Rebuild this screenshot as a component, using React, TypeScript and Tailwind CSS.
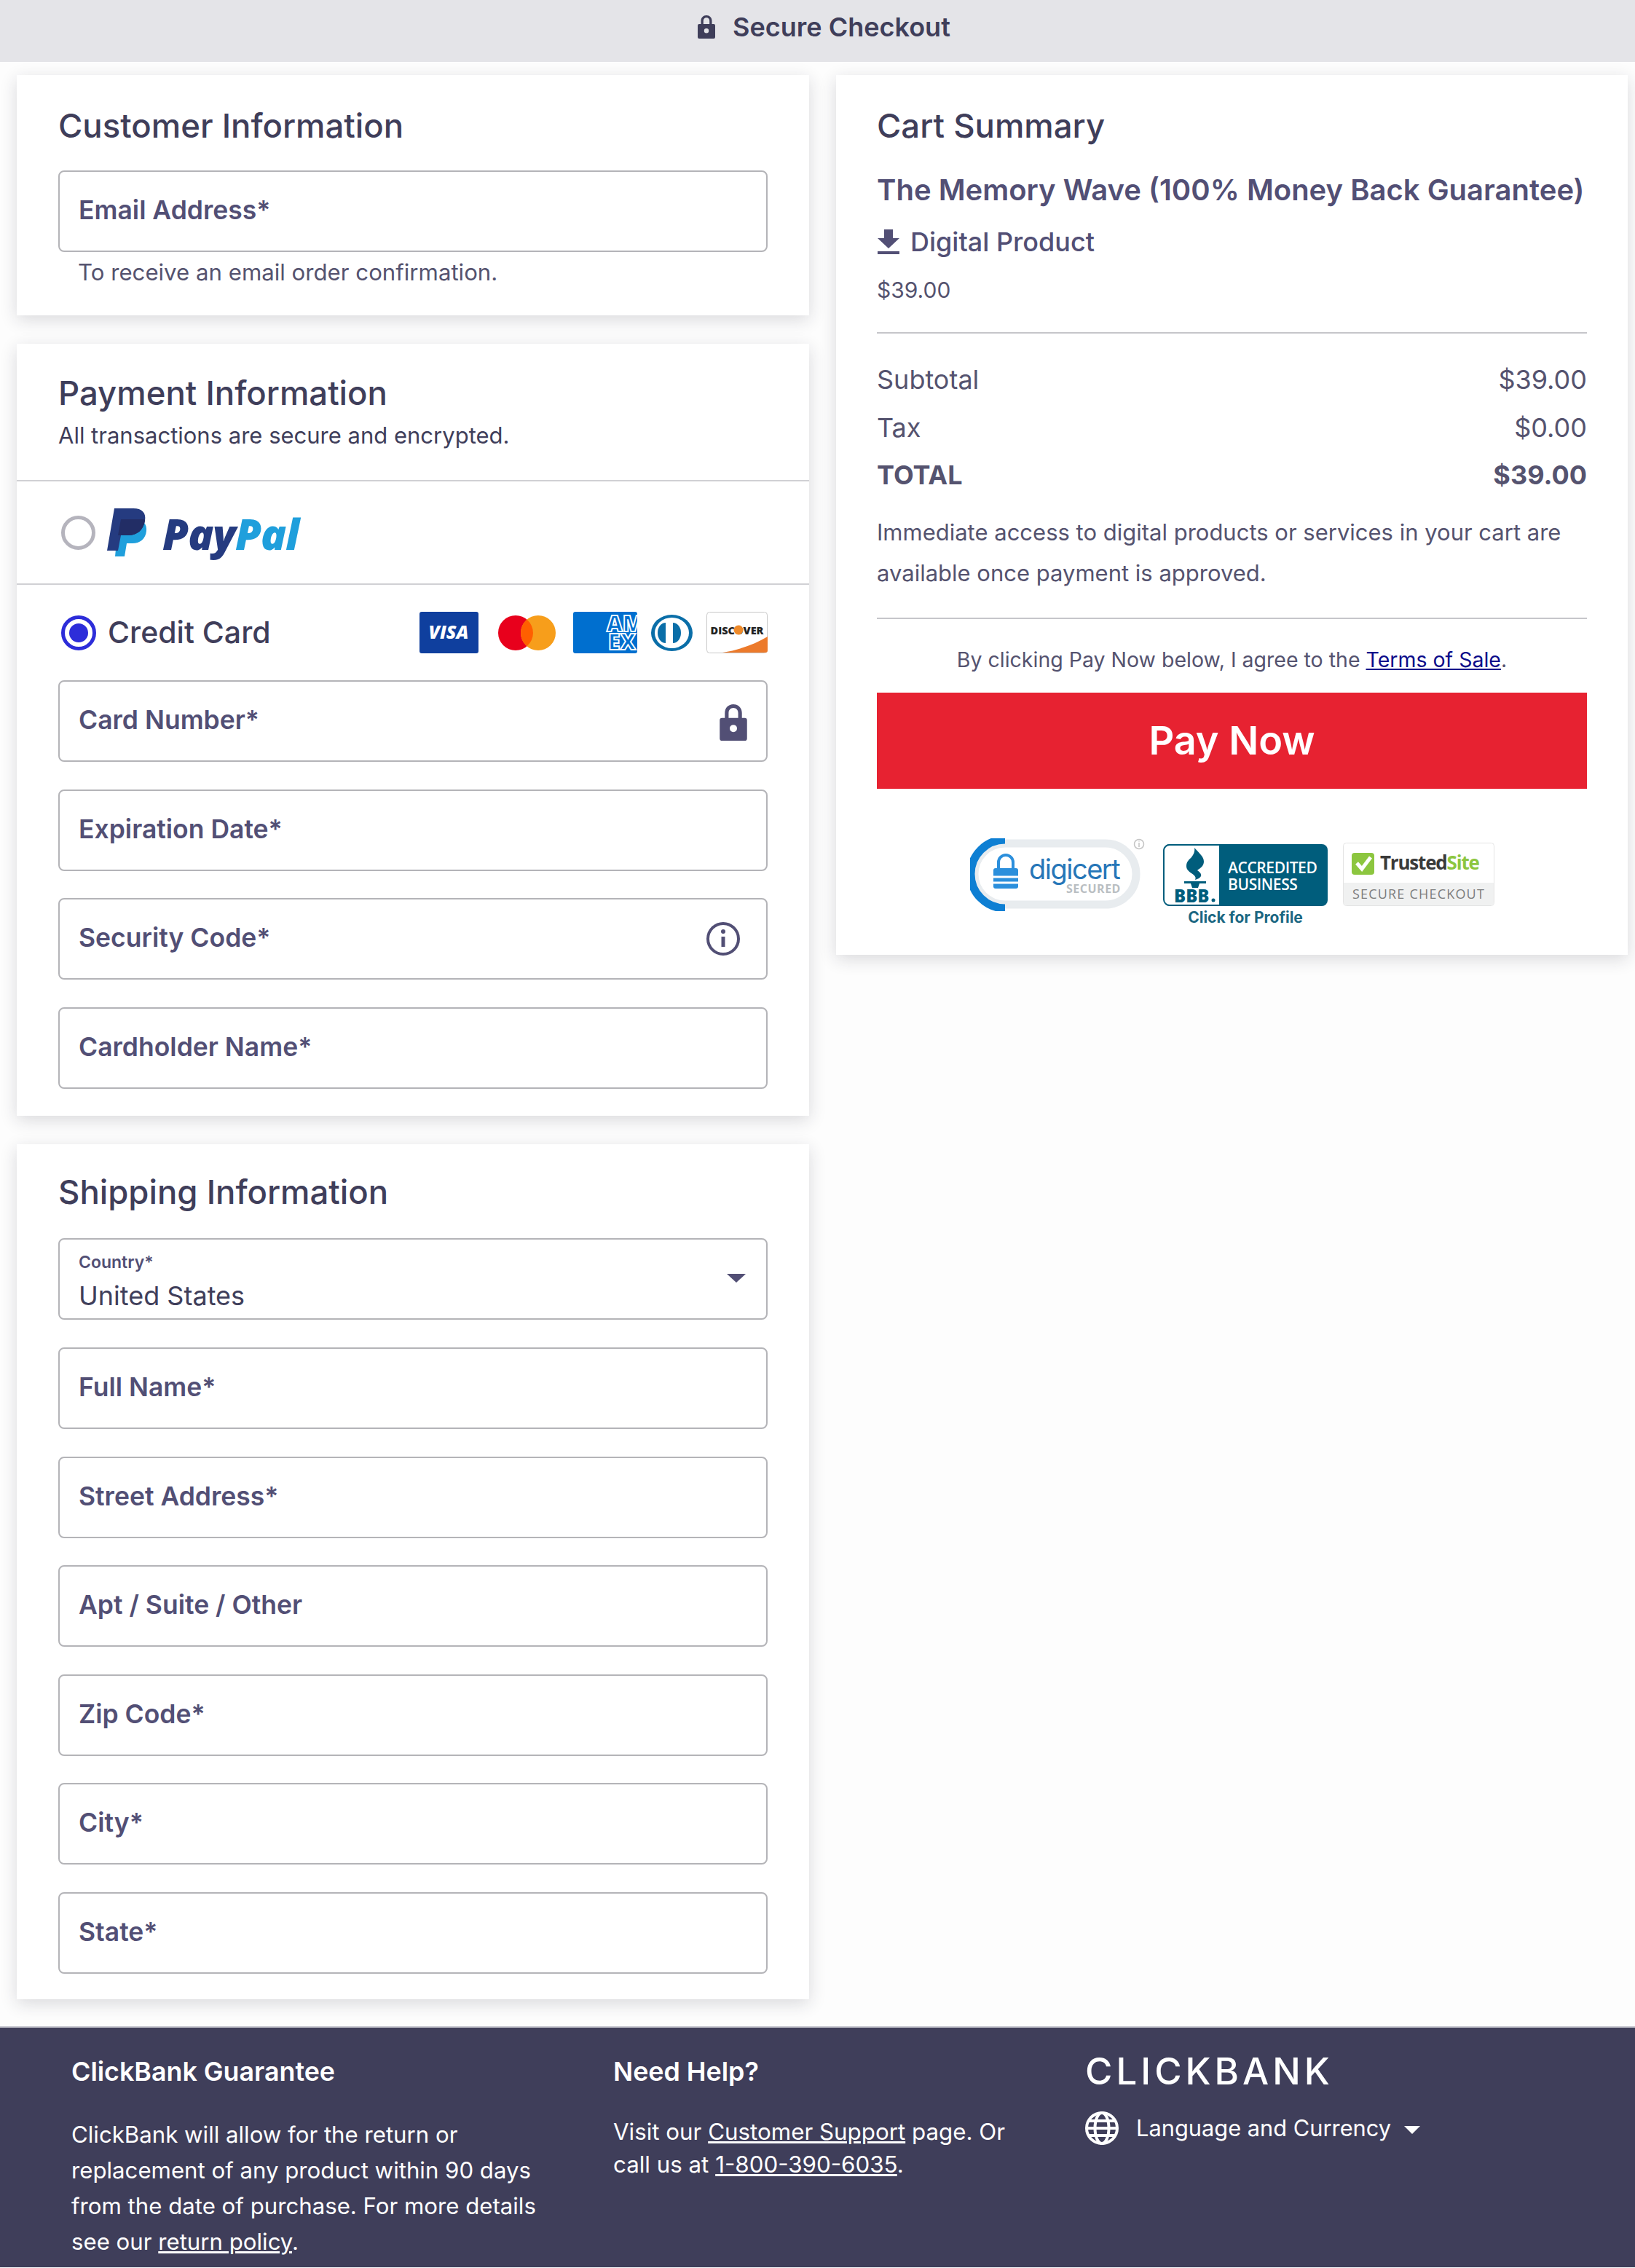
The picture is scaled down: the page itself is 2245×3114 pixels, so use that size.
import React from 'react';

function LockIcon({ className }: { className?: string }) {
  return (
    <svg className={className} viewBox="0 0 24 32" fill="currentColor">
      <path fillRule="evenodd" d="M12 0c4.4 0 7.5 3.2 7.5 7.6V12H22a2 2 0 0 1 2 2v16a2 2 0 0 1-2 2H2a2 2 0 0 1-2-2V14a2 2 0 0 1 2-2h2.500V7.600C4.500 3.200 7.600 0 12 0zm0 3.200c-2.500 0-4.200 1.800-4.200 4.400V12h8.400V7.600c0-2.600-1.700-4.400-4.200-4.400zM12 18a3.200 3.200 0 1 0 0 6.400A3.200 3.200 0 0 0 12 18z" />
    </svg>
  );
}

function Field({ label, icon }: { label: string; icon?: React.ReactNode }) {
  return (
    <div className="flex h-[112px] items-center justify-between rounded-lg border-2 border-[#b4b4b8] bg-white pl-[26px] pr-[26px]">
      <span className="-mt-[2px] text-[35.500px] font-semibold text-[#524f75]">{label}</span>
      {icon}
    </div>
  );
}

function Card({ children, className }: { children: React.ReactNode; className?: string }) {
  return <section className={`bg-white shadow-[0_6px_22px_rgba(30,30,50,0.16)] ${className ?? ''}`}>{children}</section>;
}

function Heading({ children }: { children: React.ReactNode }) {
  return <h2 className="text-[45.500px] font-medium leading-[58px] text-[#3f3e5a]">{children}</h2>;
}

function PayPalMark() {
  return (
    <svg className="h-[66px] w-[56px]" viewBox="0 0 56 66">
      <path fill="#1f9fdc" d="M16 16h24c10 0 15 6 14 15-1 11-9 17-19 17h-8l-3 18H11z" />
      <path fill="#253b80" d="M10 0h26c12 0 18 6 16 17-2 13-11 20-23 20H19l-4 21H0z" />
      <path fill="#222d65" d="M19 15h30c3 0 3 1 3 2-2 13-11 20-23 20H15z" />
    </svg>
  );
}

function CardIcons() {
  return (
    <div className="flex items-center">
      <svg className="h-[57px] w-[81px]" viewBox="0 0 81 57">
        <rect width="81" height="57" rx="3" fill="#0f3f9e" />
        <text x="40" y="37" textAnchor="middle" fill="#fff" fontSize="25" fontWeight="800" fontStyle="italic" fontFamily="Open Sans, sans-serif">VISA</text>
      </svg>
      <svg className="ml-[27px] h-[48px] w-[79px]" viewBox="0 0 79 48">
        <circle cx="24" cy="24" r="24" fill="#e8001c" />
        <circle cx="55" cy="24" r="24" fill="#f79e1b" />
        <path d="M39.500 5.700a24 24 0 0 1 0 36.600 24 24 0 0 1 0-36.600z" fill="#ff5f00" />
      </svg>
      <svg className="ml-[24px] h-[57px] w-[88px]" viewBox="0 0 88 57">
        <rect width="88" height="57" rx="3" fill="#006fcf" />
        <text x="46" y="27" fill="#006fcf" stroke="#fff" strokeWidth="1.800" fontSize="30" fontWeight="800" fontFamily="Open Sans, sans-serif">AM</text>
        <text x="48" y="52" fill="#006fcf" stroke="#fff" strokeWidth="1.800" fontSize="30" fontWeight="800" fontFamily="Open Sans, sans-serif">EX</text>
      </svg>
      <svg className="ml-[19px] h-[50px] w-[57px]" viewBox="0 0 57 50">
        <ellipse cx="28.500" cy="25" rx="28.500" ry="25" fill="#0a6ea8" />
        <ellipse cx="28.500" cy="25" rx="23.500" ry="21" fill="#fff" />
        <path fill="#0a6ea8" d="M20 11a11 14 0 0 0 0 28zM30 11a11 14 0 0 1 0 28z" />
      </svg>
      <svg className="ml-[19px] h-[57px] w-[84px]" viewBox="0 0 84 57">
        <rect x="0.500" y="0.500" width="83" height="56" rx="4" fill="#fff" stroke="#c8c8c8" />
        <path fill="#ec7a2b" d="M22 56c25-4 45-12 62-22v19a3 3 0 0 1-3 3z" />
        <text x="42" y="31" textAnchor="middle" fill="#222" fontSize="14.500" fontWeight="800" fontFamily="Open Sans, sans-serif">DISCOVER</text>
        <circle cx="44" cy="25" r="6.500" fill="#ee8a2a" />
      </svg>
    </div>
  );
}

function Badges() {
  return (
    <div className="mt-[68px] flex items-start justify-center">
      <svg className="h-[100px] w-[241px]" viewBox="0 0 241 100">
        <rect x="6" y="7" width="222" height="84" rx="42" fill="#fff" stroke="#e8ecef" strokeWidth="11" />
        <path d="M48 2A46 46 0 0 0 48 96" fill="none" stroke="#0e7fd3" strokeWidth="11" />
        <path fill="#2b8fdc" d="M35 41h28a3 3 0 0 1 3 3v22a3 3 0 0 1-3 3H35a3 3 0 0 1-3-3V44a3 3 0 0 1 3-3z" />
        <path fill="none" stroke="#2b8fdc" strokeWidth="4" d="M39 42v-9a10 10 0 0 1 20 0v9" />
        <path stroke="#fff" strokeWidth="3" d="M32 53h34M32 61h34" />
        <text x="81" y="56" fill="#2676b8" fontSize="38" fontFamily="Inter, sans-serif" letterSpacing="-1.500">digicert</text>
        <text x="132" y="75" fill="#b9bec2" fontSize="16" fontWeight="700" letterSpacing="0.500" fontFamily="Open Sans, sans-serif">SECURED</text>
        <circle cx="232" cy="8" r="6.500" fill="#fff" stroke="#c4c4c4" strokeWidth="1.500" />
        <path d="M232 6v6M232 3.500v1" stroke="#c4c4c4" strokeWidth="1.500" />
      </svg>
      <div className="ml-6 flex w-[227px] flex-col items-center pt-[7px]">
        <svg className="h-[87px] w-[227px]" viewBox="0 0 227 87">
          <rect x="1" y="1" width="225" height="85" rx="8" fill="#005d7c" />
          <path d="M9 2h69v83H9a8 8 0 0 1-8-8V9a8 8 0 0 1 8-7z" fill="#fff" stroke="#005d7c" strokeWidth="2" />
          <path fill="#005d7c" d="M43 6c7 8 13 12 13 19 0 6-5 9-9 12 4 3 6 5 5 8-1 2-4 4-8 5 2-4-1-6-5-9-4-3-7-5-7-10 0-6 4-9 7-12 3-4 5-8 4-13z" />
          <path fill="#005d7c" d="M29 52h30v3H50l-2 6h-8l-2-6H29z" />
          <text x="15" y="81" fill="#005d7c" fontSize="24" fontWeight="800" fontFamily="Open Sans, sans-serif">BBB</text>
          <circle cx="69" cy="78" r="2.500" fill="#005d7c" />
          <text x="89" y="41" fill="#fff" fontSize="21" fontWeight="600" fontFamily="Open Sans, sans-serif" letterSpacing="-0.400">ACCREDITED</text>
          <text x="89" y="64" fill="#fff" fontSize="21" fontWeight="600" fontFamily="Open Sans, sans-serif" letterSpacing="-0.400">BUSINESS</text>
        </svg>
        <span className="mt-[3px] text-[21px] font-bold leading-[24px] text-[#1b6782]">Click for Profile</span>
      </div>
      <svg className="ml-5 mt-[6px] h-[87px] w-[208px]" viewBox="0 0 208 87">
        <rect x="0.500" y="0.500" width="207" height="86" rx="4" fill="#fff" stroke="#e4e4e4" />
        <path d="M1 55h206v28a3 3 0 0 1-3 3H4a3 3 0 0 1-3-3z" fill="#f0f1f1" />
        <rect x="12" y="14" width="31" height="30" rx="4" fill="#8cc63f" />
        <path d="M19 28l7 8 12-16" fill="none" stroke="#fff" strokeWidth="5" />
        <text x="51" y="37" fill="#3a3a3a" fontSize="26" fontWeight="700" letterSpacing="-1.200" fontFamily="Open Sans, sans-serif">Trusted<tspan fill="#8cc63f">Site</tspan></text>
        <text x="104" y="77" textAnchor="middle" fill="#7d7d7d" fontSize="18" letterSpacing="1.200" fontFamily="Open Sans, sans-serif">SECURE CHECKOUT</text>
      </svg>
    </div>
  );
}

export default function App() {
  const shippingFields = ['Full Name*', 'Street Address*', 'Apt / Suite / Other', 'Zip Code*', 'City*', 'State*'];

  return (
    <div className="min-h-[3114px] bg-[#fdfdfd] [font-family:Inter,sans-serif] text-[#3f3e5a]">
      {/* Top bar */}
      <header className="flex h-[85px] items-center justify-center gap-[24px] bg-[#e4e4e8] pb-[12px] pl-[18px]">
        <LockIcon className="h-[32px] w-[24px] text-[#3f3e5a]" />
        <span className="text-[36px] font-semibold">Secure Checkout</span>
      </header>

      <main className="grid grid-cols-[1088px_1087px] gap-x-[37px] pl-[23px] pt-[18px]">
        {/* Left column */}
        <div className="flex flex-col gap-[39px]">
          <Card className="h-[330px] px-[57px] pt-[41px]">
            <Heading>Customer Information</Heading>
            <div className="mt-[32px]">
              <Field label="Email Address*" />
            </div>
            <p className="mt-[8px] pl-[27px] text-[31.200px] leading-[40px] text-[#55536f]">To receive an email order confirmation.</p>
          </Card>

          <Card className="h-[1060px]">
            <div className="h-[189px] border-b-2 border-[#d0d0d4] px-[57px] pt-[39px]">
              <Heading>Payment Information</Heading>
              <p className="mt-[9px] text-[31px] leading-[40px] text-[#3f3e5a]">All transactions are secure and encrypted.</p>
            </div>
            <div className="flex h-[142px] items-center border-b-2 border-[#d0d0d4] pl-[61px]">
              <span className="size-[47px] rounded-full border-[5px] border-[#b5b4bd]" />
              <span className="ml-[16px]"><PayPalMark /></span>
              <span className="ml-[20px] mt-[4px] text-[58px] font-extrabold italic leading-none tracking-[-1px] [font-family:'Open_Sans',sans-serif]">
                <span className="text-[#253b80]">Pay</span>
                <span className="text-[#1f9fdc]">Pal</span>
              </span>
            </div>
            <div className="px-[57px]">
              <div className="flex h-[131px] items-center justify-between">
                <div className="flex items-center pl-[4px]">
                  <span className="flex size-[48px] items-center justify-center rounded-full border-[5px] border-[#2d2dd9]">
                    <span className="size-[26px] rounded-full bg-[#2d2dd9]" />
                  </span>
                  <span className="ml-[16px] text-[41px] font-medium text-[#3f3e5a]">Credit Card</span>
                </div>
                <CardIcons />
              </div>
              <div className="flex flex-col gap-[37.500px]">
                <Field label="Card Number*" icon={<LockIcon className="mt-1 h-[50px] w-[38px] text-[#524f75]" />} />
                <Field label="Expiration Date*" />
                <Field
                  label="Security Code*"
                  icon={
                    <svg className="mr-[9px] size-[48px] text-[#524f75]" viewBox="0 0 48 48" fill="none" stroke="currentColor" strokeWidth="4">
                      <circle cx="24" cy="24" r="21" />
                      <path d="M24 21v14" strokeWidth="5" />
                      <circle cx="24" cy="14" r="3" fill="currentColor" stroke="none" />
                    </svg>
                  }
                />
                <Field label="Cardholder Name*" />
              </div>
            </div>
          </Card>

          <Card className="h-[1174px] px-[57px] pt-[37px]">
            <Heading>Shipping Information</Heading>
            <div className="mt-[34px] flex h-[112px] items-center justify-between rounded-lg border-2 border-[#b4b4b8] pl-[26px] pr-[28px]">
              <div className="flex flex-col pt-[8px]">
                <span className="text-[23px] font-semibold leading-[28px] text-[#524f75]">Country*</span>
                <span className="mt-[9px] text-[36px] leading-[46px] text-[#3f3e5a]">United States</span>
              </div>
              <svg className="mb-[2px] h-[12px] w-[26px] text-[#524f75]" viewBox="0 0 26 12" fill="currentColor">
                <path d="M0 0h26L13 12z" />
              </svg>
            </div>
            <div className="mt-[38px] flex flex-col gap-[37.500px]">
              {shippingFields.map((f) => (
                <Field key={f} label={f} />
              ))}
            </div>
          </Card>
        </div>

        {/* Cart summary */}
        <div>
          <Card className="h-[1208px] px-[56px] pt-[41px]">
            <Heading>Cart Summary</Heading>
            <h3 className="mt-[30px] whitespace-nowrap text-[40px] font-semibold leading-[58px] text-[#524f75]">The Memory Wave (100% Money Back Guarantee)</h3>
            <div className="mt-[13px] flex items-center text-[#524f75]">
              <svg className="h-[34px] w-[32px]" viewBox="0 0 32 34" fill="currentColor">
                <path d="M10 0h12v12h9L16 26 1 12h9zM1 30h30v4H1z" />
              </svg>
              <span className="ml-[14px] text-[36px] font-medium leading-[58px]">Digital Product</span>
            </div>
            <p className="mt-[8px] text-[30px] leading-[58px] text-[#55536f]">$39.00</p>
            <hr className="mt-[29px] border-t-2 border-[#c6c6ca]" />
            <div className="mt-[31px] flex flex-col text-[36px] leading-[65.500px] text-[#55536f]">
              <div className="flex justify-between"><span>Subtotal</span><span>$39.00</span></div>
              <div className="flex justify-between"><span>Tax</span><span>$0.00</span></div>
              <div className="flex justify-between font-bold"><span>TOTAL</span><span>$39.00</span></div>
            </div>
            <p className="mt-[17px] text-[31px] leading-[56px] text-[#55536f]">Immediate access to digital products or services in your cart are available once payment is approved.</p>
            <hr className="mt-[33px] border-t-2 border-[#c6c6ca]" />
            <p className="mt-[36px] text-center text-[28.500px] leading-[40px] text-[#55536f]">
              By clicking Pay Now below, I agree to the <a className="text-[#0c0c8a] underline">Terms of Sale</a>.
            </p>
            <button className="mt-[25px] h-[132px] w-full bg-[#e72231] text-[54px] font-semibold text-white">Pay Now</button>
            <Badges />
          </Card>
        </div>
      </main>

      {/* Footer */}
      <footer className="mt-[37px] grid h-[331px] grid-cols-[744px_648px_1fr] overflow-hidden border-t-2 border-[#c9c9d2] bg-[#3f3e5a] pl-[98px] text-white">
        <div className="pt-[38px]">
          <h4 className="text-[35.800px] font-semibold leading-[44px]">ClickBank Guarantee</h4>
          <p className="mt-[41px] w-[680px] text-[31.200px] leading-[49px]">
            ClickBank will allow for the return or replacement of any product within 90 days from the date of purchase. For more details see our <a className="underline">return policy</a>.
          </p>
        </div>
        <div className="pt-[38px]">
          <h4 className="text-[35.800px] font-semibold leading-[44px]">Need Help?</h4>
          <p className="mt-[39px] w-[580px] text-[31.300px] leading-[45px]">
            Visit our <a className="underline">Customer Support</a> page. Or call us at <a className="underline">1-800-390-6035</a>.
          </p>
        </div>
        <div className="pt-[32px]">
          <div className="text-[51px] font-medium leading-[56px] tracking-[5px]">CLICKBANK</div>
          <div className="mt-[27px] flex items-center">
            <svg className="size-[46px]" viewBox="0 0 46 46" fill="none" stroke="currentColor" strokeWidth="4">
              <circle cx="23" cy="23" r="21" />
              <ellipse cx="23" cy="23" rx="9.500" ry="21" />
              <path d="M2 23h42M5 13h36M5 33h36" />
            </svg>
            <span className="ml-[24px] text-[30.800px]">Language and Currency</span>
            <svg className="ml-[18px] mt-1 h-[11px] w-[22px]" viewBox="0 0 22 11" fill="currentColor">
              <path d="M0 0h22L11 11z" />
            </svg>
          </div>
        </div>
      </footer>
    </div>
  );
}
